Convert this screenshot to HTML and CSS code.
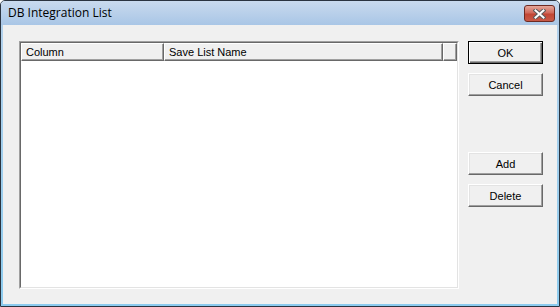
FILE: index.html
```html
<!DOCTYPE html>
<html lang="en">
<head>
    <meta charset="UTF-8">
    <title>DB Integration List</title>
    <link rel="stylesheet" href="styles.css">
</head>
<body>
    <div class="window">
        <div class="titlebar">
            <span class="title">DB Integration List</span>
            <div class="close">
                <svg width="13" height="10" viewBox="0 0 13 10">
                    <path d="M2.5 1.5 L10.5 8.5 M10.5 1.5 L2.5 8.5" stroke="#5a5a5a" stroke-width="4" stroke-linecap="square"/>
                    <path d="M2.5 1.5 L10.5 8.5 M10.5 1.5 L2.5 8.5" stroke="#fff" stroke-width="2" stroke-linecap="square"/>
                </svg>
            </div>
        </div>
        <div class="client">
            <div class="listview">
                <div class="frame">
                    <div class="header">
                        <div class="col col--name">Column</div>
                        <div class="col col--list">Save List Name</div>
                        <div class="col col--fill"></div>
                    </div>
                    <div class="rows"></div>
                </div>
            </div>
            <div class="buttons">
                <button class="btn btn--default">OK</button>
                <button class="btn">Cancel</button>
                <button class="btn btn--add">Add</button>
                <button class="btn">Delete</button>
            </div>
        </div>
    </div>
</body>
</html>
```

FILE: styles.css
```css
*{
    margin: 0;
    padding: 0;
    box-sizing: border-box;
}
body{
    font-family: "Liberation Sans", Arial, sans-serif;
    background: #fff;
}
.window{
    width: 560px;
    height: 307px;
    border: 1px solid #2b3440;
    border-radius: 5px 5px 0 0;
    background: linear-gradient(to bottom, #b6d2ec, #8ccbee);
    padding: 0 2px 2px 2px;
    display: flex;
    flex-direction: column;
}
.titlebar{
    height: 24px;
    margin: 0 -2px;
    border-radius: 4px 4px 0 0;
    background: linear-gradient(to bottom, #c9daee, #a9c6e6);
    display: flex;
    justify-content: space-between;
    align-items: flex-start;
    padding-left: 7px;
}
.title{
    font-family: "Open Sans", "Liberation Sans", sans-serif;
    font-size: 12px;
    line-height: 24px;
    color: #000;
}
.close{
    width: 31px;
    height: 17px;
    margin: 4px 4px 0 0;
    border: 1px solid #6e2a22;
    border-radius: 3px;
    background: linear-gradient(to bottom, #e6a799, #d06a5c 45%, #c24634 55%, #c85a48);
    display: flex;
    align-items: center;
    justify-content: center;
}
.client{
    flex: 1;
    background: #f0f0f0;
    display: flex;
    gap: 9px;
    padding: 16px 0 0 16px;
}
.listview{
    width: 440px;
    height: 248px;
    border: 1px solid;
    border-color: #a0a0a0 #fff #fff #a0a0a0;
}
.frame{
    height: 100%;
    border: 1px solid;
    border-color: #696969 #e3e3e3 #e3e3e3 #696969;
    background: #fff;
    display: flex;
    flex-direction: column;
}
.header{
    display: flex;
    height: 18px;
    background: #f0f0f0;
}
.col{
    height: 18px;
    font-size: 11px;
    line-height: 16px;
    padding-left: 4px;
    color: #000;
    border-top: 1px solid #fff;
    border-left: 1px solid #fff;
    border-right: 1px solid #696969;
    border-bottom: 1px solid #696969;
    box-shadow: inset -1px -1px 0 #a0a0a0;
}
.col--name{
    width: 143px;
}
.col--list{
    width: 279px;
}
.col--fill{
    width: 14px;
}
.rows{
    flex: 1;
}
.buttons{
    display: flex;
    flex-direction: column;
    gap: 9px;
}
.btn{
    width: 75px;
    height: 23px;
    font-family: "Liberation Sans", Arial, sans-serif;
    font-size: 11px;
    color: #000;
    background: #f0f0f0;
    border: 1px solid;
    border-color: #fff #696969 #696969 #fff;
    box-shadow: inset -1px -1px 0 #a0a0a0, inset 1px 1px 0 #e3e3e3;
}
.btn--default{
    border-color: #000;
    box-shadow: inset 1px 1px 0 #fff, inset -1px -1px 0 #696969, inset -2px -2px 0 #a0a0a0;
}
.btn--add{
    margin-top: 47px;
}
```
